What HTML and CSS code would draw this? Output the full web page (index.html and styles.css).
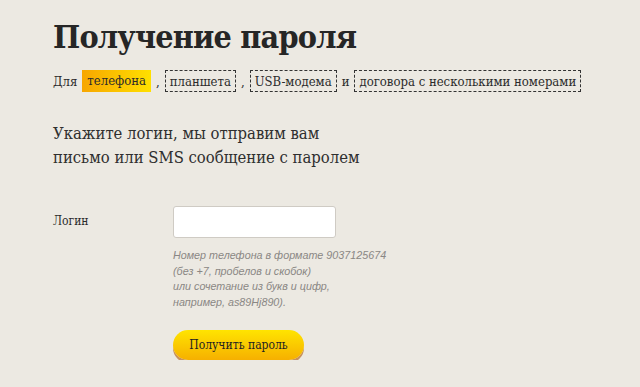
FILE: index.html
```html
<!DOCTYPE html>
<html lang="ru">
<head>
<meta charset="utf-8">
<link rel="stylesheet" href="styles.css">
</head>
<body>
<main class="page">
  <h1 class="title">Получение пароля</h1>
  <div class="tabs">
    <span class="lead">Для</span>
    <span class="tab tab-active">телефона</span><span class="sep">,</span>
    <span class="tab">планшета</span><span class="sep">,</span>
    <span class="tab">USB-модема</span><span class="sep">и</span>
    <span class="tab">договора с несколькими номерами</span>
  </div>
  <p class="intro">Укажите логин, мы отправим вам<br>письмо или SMS сообщение с паролем</p>
  <form class="form">
    <label class="label" for="login">Логин</label>
    <div class="field">
      <input class="input" id="login" type="text">
      <p class="hint">Номер телефона в формате 9037125674<br>(без +7, пробелов и скобок)<br>или сочетание из букв и цифр,<br>например, as89Hj890).</p>
      <button class="btn" type="button">Получить пароль</button>
    </div>
  </form>
</main>
</body>
</html>
```
FILE: styles.css
```css
html, body {
  margin: 0;
  padding: 0;
  background: #ece9e2;
}
.page {
  padding: 17px 0 0 53px;
  font-family: "DejaVu Serif Condensed", "DejaVu Serif", serif;
  color: #2b2b2b;
}
.title {
  margin: 0;
  font-family: "DejaVu Serif Condensed", "DejaVu Serif", serif;
  font-weight: bold;
  font-size: 32px;
  line-height: 40px;
  letter-spacing: -0.8px;
  color: #262626;
}
.tabs {
  margin-top: 12px;
  display: flex;
  align-items: center;
  font-size: 13px;
  height: 24px;
}
.lead { margin-right: 5px; }
.tab {
  display: inline-block;
  height: 22px;
  line-height: 22px;
  padding: 0 4px;
  border: 1px dashed #333;
  box-sizing: border-box;
}
.tab-active {
  border: none;
  background: linear-gradient(to right, #f7a600, #ffe000);
  padding: 0 5px;
}
.sep { margin: 0 5px; }
.intro {
  margin: 29px 0 0;
  font-size: 16.5px;
  line-height: 24px;
  color: #2f2f2f;
}
.form {
  margin-top: 36px;
  display: flex;
}
.label {
  width: 120px;
  font-size: 12px;
  padding-top: 8px;
}
.field { display: flex; flex-direction: column; align-items: flex-start; }
.input {
  width: 163px;
  height: 32px;
  box-sizing: border-box;
  border: 1px solid #cfcbc4;
  border-radius: 3px;
  background: #fff;
  margin: 0;
}
.hint {
  margin: 10px 0 0;
  font-family: "Liberation Sans", Arial, sans-serif;
  font-style: italic;
  font-size: 10.75px;
  line-height: 15.5px;
  color: #8a8784;
}
.btn {
  margin-top: 20px;
  width: 131px;
  height: 30px;
  border: none;
  border-radius: 15px;
  background: linear-gradient(#ffe400, #f6b000);
  box-shadow: 0 3px 0 #c9925a;
  font-family: "DejaVu Serif Condensed", "DejaVu Serif", serif;
  font-size: 12px;
  color: #222;
  padding: 0;
}
```
